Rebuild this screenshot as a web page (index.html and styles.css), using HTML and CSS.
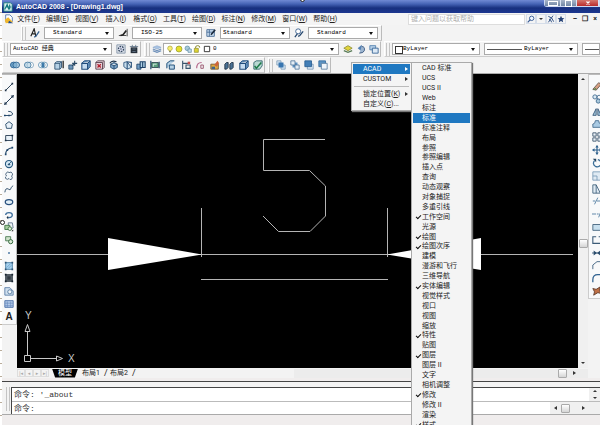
FILE: index.html
```html
<!DOCTYPE html>
<html lang="zh-CN">
<head>
    <meta charset="UTF-8">
    <meta name="viewport" content="width=device-width, initial-scale=1.0">
    <title>AutoCAD 2008 - [Drawing1.dwg]</title>
    <link rel="stylesheet" href="styles.css">
</head>
<body>
    <!-- Icon set -->
    <svg class="sprite" aria-hidden="true">
        <symbol id="i-app" viewBox="0 0 12 12"><path d="M1 1h8l2 2v8H1z" fill="#dff3f1" stroke="#177"/><path d="M2 9l3-6 2 6M3 6h7M8 3v6" fill="none" stroke="#157a80" stroke-width="1.4"/></symbol>
        <symbol id="i-close" viewBox="0 0 12 12"><path d="M3 3l6 6M9 3l-6 6" stroke="#fff" stroke-width="2.4"/></symbol>
        <symbol id="i-doc" viewBox="0 0 12 12"><path d="M2 1h5l3 3v5H2z" fill="#fff" stroke="#4b6fa8"/><path d="M1 7l4-3 6 6-9 1z" fill="#f0b72c"/><path d="M6 8l5 3H5z" fill="#234b91"/></symbol>
        <symbol id="i-textstyle" viewBox="0 0 12 12"><path d="M1 10L5 1l2 9M3 7h4" fill="none" stroke="#222" stroke-width="1.4"/><path d="M11 4L7 10l-2 1" fill="none" stroke="#35608f" stroke-width="1.6"/></symbol>
        <symbol id="i-dimstyle" viewBox="0 0 12 12"><path d="M11 1v9M1 9h9" stroke="#333" fill="none"/><path d="M10 3L6 8 3 9" fill="none" stroke="#222" stroke-width="2"/></symbol>
        <symbol id="i-tablestyle" viewBox="0 0 12 12"><path d="M1 2h9v8H1zM1 5h9M4 2v8" fill="#cfe0f2" stroke="#3f6590"/><path d="M11 2L6 8" stroke="#1b2a3c" stroke-width="2"/></symbol>
        <symbol id="i-leader" viewBox="0 0 12 12"><circle cx="5" cy="4" r="3" fill="#fff" stroke="#2d5687"/><path d="M4 7L1 11M11 4L7 9l-2 1" fill="none" stroke="#23456d" stroke-width="1.5"/></symbol>
        <symbol id="i-gear" viewBox="0 0 12 12"><path d="M1 1h10v10H1z" fill="#d6dde5" stroke="#8796a8"/><circle cx="6" cy="6" r="3" fill="#eef" stroke="#33475f" stroke-width="1.6" stroke-dasharray="2 1"/><circle cx="6" cy="6" r="1" fill="#33475f"/></symbol>
        <symbol id="i-work" viewBox="0 0 12 12"><path d="M2 4h8v7H2z" fill="#27313c"/><path d="M1 3h10M4 1v3M8 1v3M4 6h4M4 9h4" stroke="#65788c"/></symbol>
        <symbol id="i-layers" viewBox="0 0 12 12"><path d="M1 4l5-2 5 2-5 2z" fill="#a9c4e4" stroke="#7c9cc2" stroke-width=".6"/><path d="M1 6l5 2 5-2M1 8l5 2 5-2" fill="none" stroke="#6d8fb9" stroke-width="1.4"/></symbol>
        <symbol id="i-bulb" viewBox="0 0 12 12"><circle cx="6" cy="5" r="3.5" fill="#f7ee74" stroke="#a9a238"/><path d="M4.500 9h3v2h-3z" fill="#8c8c70"/></symbol>
        <symbol id="i-sun" viewBox="0 0 12 12"><circle cx="6" cy="6" r="4.500" fill="#e6df2d" stroke="#8d932a"/></symbol>
        <symbol id="i-freeze" viewBox="0 0 12 12"><circle cx="5" cy="5" r="3.500" fill="#a8c9d8" stroke="#5889a3"/><path d="M6 6h5v5H6z" fill="#c7dcea" stroke="#5889a3"/></symbol>
        <symbol id="i-lock" viewBox="0 0 12 12"><path d="M4 5V3q0-2 3-2t3 2v1" fill="none" stroke="#87872a" stroke-width="1.400"/><path d="M2 5h6v6H2z" fill="#ded434" stroke="#87872a"/></symbol>
        <symbol id="i-swatch" viewBox="0 0 12 12"><path d="M2 2h8v8H2z" fill="#fff" stroke="#222" stroke-width="1.300"/></symbol>
        <symbol id="i-laymake" viewBox="0 0 12 12"><path d="M1 5l5-3 5 3-5 3z" fill="#e2d53c" stroke="#8d8c35"/><path d="M1 8l5 2 5-2" fill="none" stroke="#587b55" stroke-width="1.500"/></symbol>
        <symbol id="i-layprev" viewBox="0 0 12 12"><path d="M7 1L2 5l5 4z" fill="#5481b4"/><path d="M7 3q4 0 3 5-1 3-6 3" fill="#9db5cf" stroke="#314f78"/></symbol>
        <symbol id="i-laystate" viewBox="0 0 12 12"><path d="M1 2h7v5H1z" fill="#b7d0e8" stroke="#4b7bab"/><path d="M4 5h7v6H4z" fill="#dce9f5" stroke="#2d5d90"/></symbol>
        <symbol id="i-union" viewBox="0 0 12 12"><ellipse cx="4.500" cy="6" rx="4" ry="3.500" fill="#6fa3c9" stroke="#2c6290"/><ellipse cx="7.500" cy="6" rx="4" ry="3.500" fill="#8cb8d6" fill-opacity=".7" stroke="#2c6290"/></symbol>
        <symbol id="i-subtract" viewBox="0 0 12 12"><ellipse cx="7.500" cy="6" rx="4" ry="3.500" fill="#fff" stroke="#7ea2bd"/><ellipse cx="4.500" cy="6" rx="4" ry="3.500" fill="#a8cbe0" fill-opacity=".6" stroke="#44789f"/></symbol>
        <symbol id="i-intersect" viewBox="0 0 12 12"><ellipse cx="4.500" cy="6" rx="4" ry="3.500" fill="#f5faff" stroke="#6796b6"/><ellipse cx="7.500" cy="6" rx="4" ry="3.500" fill="none" stroke="#6796b6"/><ellipse cx="6" cy="6" rx="1.500" ry="3" fill="#3b79a9"/></symbol>
        <symbol id="i-extrude" viewBox="0 0 12 12"><path d="M1 4h6v7H1zM1 4l2-2h6v7l-2 2M7 4l2-2" fill="#b7d2e6" stroke="#254a6c"/><path d="M11 1v9" stroke="#222" stroke-width="1.500"/></symbol>
        <symbol id="i-moveface" viewBox="0 0 12 12"><path d="M1 6h5v5H1z" fill="#6f97ba" stroke="#254a6c"/><path d="M5 7l3-3M8 1v6M5 4h6" stroke="#2b4a66" stroke-width="1.300"/></symbol>
        <symbol id="i-cube" viewBox="0 0 12 12"><path d="M1 4h7v7H1z" fill="#c6dcf0" stroke="#204c7c" stroke-width="1.300"/><path d="M1 4l3-3h7v7l-3 3V4l3-3" fill="#6b98c4" stroke="#204c7c" stroke-width="1.200"/></symbol>
        <symbol id="i-delface" viewBox="0 0 12 12"><path d="M1 3h8v8H1zM1 3l2-2h8v8l-2 2" fill="#ead7dd" stroke="#4e3442"/><path d="M3 5l4 4M7 5L3 9" stroke="#b2202f" stroke-width="1.600"/></symbol>
        <symbol id="i-rotface" viewBox="0 0 12 12"><path d="M2 5l4-2 4 2v4l-4 2-4-2zM2 5l4 2 4-2M6 7v4" fill="#7ba5ca" stroke="#1e4368"/><path d="M1 4q2-4 8-2" fill="none" stroke="#20364e" stroke-width="1.300"/></symbol>
        <symbol id="i-taper" viewBox="0 0 12 12"><path d="M1 3l4-1 5 7-5 2-4-3z" fill="#c7ddec" stroke="#254e78"/><path d="M5 2l5 1v6M5 2v9" fill="none" stroke="#254e78" stroke-width="1.300"/></symbol>
        <symbol id="i-copyface" viewBox="0 0 12 12"><path d="M1 5h5v6H1z" fill="#75a0c6" stroke="#1d4167"/><path d="M5 2h6v7H5zM8 2v7" fill="#afd0e5" stroke="#1d4167" stroke-width="1.300"/></symbol>
        <symbol id="i-colorface" viewBox="0 0 12 12"><path d="M1 1v10M11 2v8" stroke="#275070" stroke-width="1.500"/><path d="M2 3h8v6H2z" fill="#589f7c" stroke="#29424e"/><path d="M4 8V5h4" fill="none" stroke="#e7f1ee"/></symbol>
        <symbol id="i-copyedge" viewBox="0 0 12 12"><path d="M1 10V4l4-3h5M4 11V6h6v5z" fill="#b7d2e6" stroke="#26547d" stroke-width="1.200"/></symbol>
        <symbol id="i-coloredge" viewBox="0 0 12 12"><path d="M2 1v10M2 4h7M6 6h5v4H6z" fill="#eee" stroke="#38546b" stroke-width="1.300"/><path d="M8 2h3v3H8z" fill="#c8504f"/></symbol>
        <symbol id="i-imprint" viewBox="0 0 12 12"><path d="M2 10q0-7 6-7" fill="none" stroke="#b66b8d" stroke-width="1.400"/><path d="M7 6h3v4H7z" fill="none" stroke="#914963"/></symbol>
        <symbol id="i-clean" viewBox="0 0 12 12"><path d="M1 5h9v6H1z" fill="#dfab40" stroke="#73532a"/><path d="M5 6l4-5 2 3-3 4z" fill="#ce643b"/><path d="M2 8h4v3H2z" fill="#41648c"/></symbol>
        <symbol id="i-separate" viewBox="0 0 12 12"><path d="M1 5l2-2h2v6l-2 2H1zM7 5l2-2h2v6l-2 2H7z" fill="#4a7194" stroke="#1c2c3f"/></symbol>
        <symbol id="i-check" viewBox="0 0 12 12"><path d="M1 3l3-2h7v6l-3 4H1z" fill="#b9d8d2" stroke="#2c6066"/><path d="M2 7l2 3 6-7" fill="none" stroke="#1c7a48" stroke-width="1.800"/></symbol>
        <symbol id="i-front" viewBox="0 0 12 12"><path d="M1 1h5v5H1zM6 6h5v5H6z" fill="#d7e5f2" stroke="#7f9db8"/><path d="M3 3h6v6H3z" fill="#3976b0"/></symbol>
        <symbol id="i-back" viewBox="0 0 12 12"><path d="M3 3h6v6H3z" fill="#5a91c3"/><path d="M1 1h5v5H1zM6 6h5v5H6z" fill="#e4edf5" stroke="#56799b"/></symbol>
        <symbol id="i-above" viewBox="0 0 12 12"><path d="M4 5h7v6H4z" fill="#dce8f3" stroke="#7695b3"/><path d="M1 1h8v7H1z" fill="#427eb6" stroke="#285e91"/></symbol>
        <symbol id="i-under" viewBox="0 0 12 12"><path d="M1 1h8v7H1z" fill="#5d94c4" stroke="#336b9d"/><path d="M4 4h7v7H4z" fill="#f0f5fa" stroke="#56799b"/></symbol>
        <symbol id="i-line" viewBox="0 0 12 12"><path d="M2 10l8-8" stroke="#31475e" stroke-width="1.200"/><path d="M1 9h2v2H1zM9 1h2v2H9z" fill="#1f3347"/></symbol>
        <symbol id="i-xline" viewBox="0 0 12 12"><path d="M1 11L11 1" stroke="#263c54" stroke-width="1.200"/><path d="M0 12l1-4 3 3zM12 0L8 1l3 3z" fill="#263c54"/></symbol>
        <symbol id="i-pline" viewBox="0 0 12 12"><path d="M1 9h6q4 0 3-3-1-2-5-2" fill="none" stroke="#35536f" stroke-width="1.200"/><path d="M0 8h2v2H0zM5 8h2v2H5z" fill="#1f466c"/></symbol>
        <symbol id="i-polygon" viewBox="0 0 12 12"><path d="M6 2l4 3-1 5H3L2 5z" fill="#e8f1f8" stroke="#3b5b77" stroke-width="1.200"/></symbol>
        <symbol id="i-rect" viewBox="0 0 12 12"><path d="M2 3h8v6H2z" fill="#e8f1f8" stroke="#3b4f63" stroke-width="1.200"/><path d="M1 8h2v2H1zM9 2h2v2H9z" fill="#1f3347"/></symbol>
        <symbol id="i-arc" viewBox="0 0 12 12"><path d="M2 10q0-7 8-8" fill="none" stroke="#2f506f" stroke-width="1.300"/><path d="M1 9h2v2H1zM9 1h2v2H9zM3 4h2v2H3z" fill="#1f466c"/></symbol>
        <symbol id="i-circle" viewBox="0 0 12 12"><circle cx="6" cy="6" r="4.300" fill="#d6e9f5" stroke="#28597f" stroke-width="1.300"/><path d="M6 6l3-3M5 6h2v1H5z" stroke="#28597f"/></symbol>
        <symbol id="i-cloud" viewBox="0 0 12 12"><path d="M3 2q2-2 3 0 3-2 4 1 1 2-1 3 2 2 0 4-2 1-3-1-2 2-4 0-1-2 1-3-2-2 0-4z" fill="#f3f8fb" stroke="#4a647d" stroke-width="1.100"/></symbol>
        <symbol id="i-spline" viewBox="0 0 12 12"><path d="M1 10q1-6 4-4t3 0 3-4" fill="none" stroke="#3d5a75" stroke-width="1.200"/></symbol>
        <symbol id="i-ellipse" viewBox="0 0 12 12"><ellipse cx="6" cy="6" rx="4.500" ry="3" fill="#e3f0f8" stroke="#274f7d" stroke-width="1.500"/></symbol>
        <symbol id="i-ellarc" viewBox="0 0 12 12"><path d="M2 6q0-3 4-3t4 3-4 3H4" fill="none" stroke="#3c6d9b" stroke-width="1.500"/><path d="M5 7v4L3 9z" fill="#1f3347"/></symbol>
        <symbol id="i-insert" viewBox="0 0 12 12"><path d="M5 1h5l1 6-5 2z" fill="#eef3f6" stroke="#597087"/><path d="M1 4h6v5H1z" fill="#a6cfa0" stroke="#366c3c"/><circle cx="7" cy="8" r="2.200" fill="#e0edda" stroke="#366c3c"/><path d="M9 11h2V9z" fill="#111"/></symbol>
        <symbol id="i-block" viewBox="0 0 12 12"><path d="M2 2h6v5H2z" fill="#cfe2cb" stroke="#3f7147"/><circle cx="8" cy="8" r="2.500" fill="#dcebd7" stroke="#356b3f" stroke-width="1.200"/></symbol>
        <symbol id="i-point" viewBox="0 0 12 12"><path d="M5 5h2v2H5z" fill="#2f6296"/></symbol>
        <symbol id="i-hatch" viewBox="0 0 12 12"><path d="M2 2h8v8H2z" fill="#a9d2ee" stroke="#3b759c"/><path d="M1 1h2v2H1zM9 1h2v2H9zM1 9h2v2H1zM9 9h2v2H9z" fill="#305675"/><path d="M3 8l5-5M5 9l4-4" stroke="#6ba4cb"/></symbol>
        <symbol id="i-gradient" viewBox="0 0 12 12"><path d="M2 2h8v8H2z" fill="#59626b" stroke="#222c35"/><path d="M1 1h2v2H1zM9 1h2v2H9zM1 9h2v2H1zM9 9h2v2H9z" fill="#14212d"/><path d="M4 4h4v4H4z" fill="#303941"/></symbol>
        <symbol id="i-region" viewBox="0 0 12 12"><path d="M1 2h6l4 4v5H1z" fill="#d0e0ef" stroke="#5377a1"/><circle cx="7" cy="7" r="2.500" fill="#f2f7fb" stroke="#4d7299"/></symbol>
        <symbol id="i-table" viewBox="0 0 12 12"><path d="M1 2h10v8H1z" fill="#b5cbea" stroke="#4168a2"/><path d="M1 5h10M1 8h10M4 3v7M8 3v7" stroke="#6689bd" stroke-width=".8"/></symbol>
        <symbol id="i-erase" viewBox="0 0 12 12"><path d="M1 10l7-8 3 2-6 7z" fill="#d79f83" stroke="#60534b"/><path d="M1 11l3-3 2 2z" fill="#5b8752"/></symbol>
        <symbol id="i-copy" viewBox="0 0 12 12"><circle cx="3.500" cy="3.500" r="2.500" fill="#dbeaf4" stroke="#38648a"/><circle cx="8.500" cy="4" r="2.500" fill="none" stroke="#38648a"/><circle cx="7.500" cy="8.500" r="2.500" fill="#a9c8dc" stroke="#38648a"/></symbol>
        <symbol id="i-mirror" viewBox="0 0 12 12"><path d="M5 2v8H1zM7 2v8h4z" fill="#a6c7dd" stroke="#2b4e70"/></symbol>
        <symbol id="i-offset" viewBox="0 0 12 12"><path d="M1 9V6q3 0 3-4h4q0 4 3 4v4H1z" fill="#a9cae3" stroke="#3b6488"/></symbol>
        <symbol id="i-array" viewBox="0 0 12 12"><path d="M1 1h4v4H1zM7 1h4v4H7zM1 7h4v4H1zM7 7h4v4H7z" fill="#eaf1f7" stroke="#344d66"/></symbol>
        <symbol id="i-move" viewBox="0 0 12 12"><path d="M6 1v10M1 6h10" stroke="#2e618e" stroke-width="1.400"/><path d="M4 3l2-3 2 3zM4 9l2 3 2-3zM3 4L0 6l3 2zM9 4l3 2-3 2z" fill="#2e618e"/></symbol>
        <symbol id="i-rotate" viewBox="0 0 12 12"><path d="M3 3q-3 4 1 7 5 2 7-3 0-4-4-5" fill="none" stroke="#3b6f98" stroke-width="1.500"/><path d="M1 1h4v4z" fill="#234460"/></symbol>
        <symbol id="i-scale" viewBox="0 0 12 12"><path d="M1 1h10v10H1zM1 6h5v5" fill="#dfeaf3" stroke="#7799b6"/></symbol>
        <symbol id="i-stretch" viewBox="0 0 12 12"><path d="M1 1h4l5 10H1zM5 1v10" fill="#dfeaf3" stroke="#3b5b77"/></symbol>
        <symbol id="i-trim" viewBox="0 0 12 12"><path d="M1 6h3M6 6h5M3 10l4-8" stroke="#44759b"/></symbol>
        <symbol id="i-extend" viewBox="0 0 12 12"><path d="M0 6h5M6 6h2M8 10l3-8" stroke="#44759b"/></symbol>
        <symbol id="i-break" viewBox="0 0 12 12"><path d="M1 3h10v7H1z" fill="#c8e0ef" stroke="#3b5b77"/></symbol>
        <symbol id="i-breakpt" viewBox="0 0 12 12"><path d="M5 2H1v8h10V6M8 2h3" fill="none" stroke="#3b5b77" stroke-width="1.300"/></symbol>
        <symbol id="i-join" viewBox="0 0 12 12"><path d="M0 6h12" stroke="#2a4d6d"/><path d="M2 3l4 3-4 3zM10 3L6 6l4 3z" fill="#2a4d6d"/></symbol>
        <symbol id="i-chamfer" viewBox="0 0 12 12"><path d="M1 11V6l5-4h5" fill="none" stroke="#52718d" stroke-width="1.200"/></symbol>
        <symbol id="i-fillet" viewBox="0 0 12 12"><path d="M1 11V8q0-6 6-6h4" fill="none" stroke="#2f6190" stroke-width="1.500"/></symbol>
        <symbol id="i-explode" viewBox="0 0 12 12"><path d="M1 3l4 1 5-3-1 4 2 4-4-1-5 3 1-4z" fill="#bf7046" stroke="#5b3b2c"/></symbol>
        <symbol id="i-search" viewBox="0 0 12 12"><circle cx="7" cy="5" r="3.300" fill="#eef5ff" stroke="#385b95" stroke-width="1.400"/><path d="M5 7l-4 4" stroke="#385b95" stroke-width="1.800"/></symbol>
        <symbol id="i-comm" viewBox="0 0 12 12"><path d="M2 2q6 1 8 8M3 6q3 1 4 5M9 1L2 11" fill="none" stroke="#345589" stroke-width="1.500"/></symbol>
        <symbol id="i-star" viewBox="0 0 12 12"><path d="M6 1l1.500 3.500 3.500.4-2.600 2.400.8 3.700L6 9l-3.200 2 .8-3.700L1 4.900l3.500-.4z" fill="#254276"/></symbol>
    </svg>

    <header class="titlebar">
        <svg class="icon"><use href="#i-app"/></svg>
        <h1>AutoCAD 2008 - [Drawing1.dwg]</h1>
        <div class="window-buttons">
            <button class="win-min" aria-label="最小化"></button>
            <button class="win-max" aria-label="还原"></button>
            <button class="win-close" aria-label="关闭"><svg class="icon"><use href="#i-close"/></svg></button>
        </div>
    </header>

    <nav class="menubar">
        <svg class="icon"><use href="#i-doc"/></svg>
        <div class="menus">
            <button>文件(<u>F</u>)</button>
            <button>编辑(<u>E</u>)</button>
            <button>视图(<u>V</u>)</button>
            <button>插入(<u>I</u>)</button>
            <button>格式(<u>O</u>)</button>
            <button>工具(<u>T</u>)</button>
            <button>绘图(<u>D</u>)</button>
            <button>标注(<u>N</u>)</button>
            <button>修改(<u>M</u>)</button>
            <button>窗口(<u>W</u>)</button>
            <button>帮助(<u>H</u>)</button>
        </div>
        <input class="help-search" type="text" placeholder="键入问题以获取帮助" aria-label="帮助搜索">
        <div class="help-tools">
            <button aria-label="搜索"><svg class="icon"><use href="#i-search"/></svg></button>
            <button aria-label="搜索选项"><i class="arrow-down"></i></button>
            <button aria-label="通讯中心"><svg class="icon"><use href="#i-comm"/></svg></button>
            <button aria-label="收藏夹"><svg class="icon"><use href="#i-star"/></svg></button>
        </div>
        <div class="doc-buttons">
            <button aria-label="最小化文档">–</button>
            <button aria-label="还原文档">❐</button>
            <button aria-label="关闭文档">×</button>
        </div>
    </nav>

    <!-- Styles toolbar -->
    <div class="toolbar toolbar-styles">
        <div class="bar">
            <i class="grip"></i>
            <svg class="icon"><use href="#i-textstyle"/></svg>
            <span class="combo"><select aria-label="文字样式"><option>Standard</option></select></span>
            <svg class="icon"><use href="#i-dimstyle"/></svg>
            <span class="combo"><select aria-label="标注样式"><option>ISO-25</option></select></span>
            <svg class="icon"><use href="#i-tablestyle"/></svg>
            <span class="combo tight"><select aria-label="表格样式"><option>Standard</option></select></span>
            <svg class="icon"><use href="#i-leader"/></svg>
            <span class="combo"><select aria-label="多重引线样式"><option>Standard</option></select></span>
        </div>
    </div>

    <!-- Workspace, layers and properties -->
    <div class="toolbar toolbar-layers">
        <div class="bar">
            <i class="grip"></i>
            <span class="combo tight workspace-select"><select aria-label="工作空间"><option>AutoCAD 经典</option></select></span>
            <button aria-label="工作空间设置"><svg class="icon"><use href="#i-gear"/></svg></button>
            <button aria-label="我的工作空间"><svg class="icon"><use href="#i-work"/></svg></button>
        </div>
        <div class="bar">
            <i class="grip"></i>
            <button aria-label="图层特性管理器"><svg class="icon"><use href="#i-layers"/></svg></button>
            <span class="combo layer-select">
                <select aria-label="图层"><option>0</option></select>
                <span class="layer-flags">
                    <svg class="icon"><use href="#i-bulb"/></svg>
                    <svg class="icon"><use href="#i-sun"/></svg>
                    <svg class="icon"><use href="#i-freeze"/></svg>
                    <svg class="icon"><use href="#i-lock"/></svg>
                    <svg class="icon"><use href="#i-swatch"/></svg>
                </span>
            </span>
            <button aria-label="置为当前图层"><svg class="icon"><use href="#i-laymake"/></svg></button>
            <button aria-label="上一个图层"><svg class="icon"><use href="#i-layprev"/></svg></button>
            <button aria-label="图层状态"><svg class="icon"><use href="#i-laystate"/></svg></button>
        </div>
        <div class="bar bar-props">
            <i class="grip"></i>
            <span class="combo color-select"><select aria-label="颜色"><option>ByLayer</option></select></span>
            <span class="combo line-select"><select aria-label="线型"><option>ByLayer</option></select></span>
            <span class="combo weight-select"><select aria-label="线宽"><option></option></select></span>
        </div>
    </div>

    <!-- Solid editing and draw order -->
    <div class="toolbar toolbar-solids">
        <div class="bar">
            <div class="group group-bool">
                <svg class="icon"><use href="#i-union"/></svg>
                <svg class="icon"><use href="#i-subtract"/></svg>
                <svg class="icon"><use href="#i-intersect"/></svg>
            </div>
            <div class="group group-face">
                <svg class="icon"><use href="#i-extrude"/></svg>
                <svg class="icon"><use href="#i-moveface"/></svg>
                <svg class="icon"><use href="#i-cube"/></svg>
                <svg class="icon"><use href="#i-delface"/></svg>
                <svg class="icon"><use href="#i-rotface"/></svg>
                <svg class="icon"><use href="#i-taper"/></svg>
                <svg class="icon"><use href="#i-copyface"/></svg>
                <svg class="icon"><use href="#i-colorface"/></svg>
            </div>
            <div class="group group-body">
                <svg class="icon"><use href="#i-copyedge"/></svg>
                <svg class="icon"><use href="#i-coloredge"/></svg>
                <svg class="icon"><use href="#i-imprint"/></svg>
                <svg class="icon"><use href="#i-clean"/></svg>
                <svg class="icon"><use href="#i-separate"/></svg>
                <svg class="icon"><use href="#i-cube"/></svg>
                <svg class="icon"><use href="#i-check"/></svg>
            </div>
        </div>
        <div class="bar">
            <i class="grip"></i>
            <div class="group group-order">
                <svg class="icon"><use href="#i-front"/></svg>
                <svg class="icon"><use href="#i-back"/></svg>
                <svg class="icon"><use href="#i-above"/></svg>
                <svg class="icon"><use href="#i-under"/></svg>
            </div>
        </div>
    </div>

    <main class="workspace">
        <aside class="tools tools-draw">
            <svg class="icon"><use href="#i-line"/></svg>
            <svg class="icon"><use href="#i-xline"/></svg>
            <svg class="icon"><use href="#i-pline"/></svg>
            <svg class="icon"><use href="#i-polygon"/></svg>
            <svg class="icon"><use href="#i-rect"/></svg>
            <svg class="icon"><use href="#i-arc"/></svg>
            <svg class="icon"><use href="#i-circle"/></svg>
            <svg class="icon"><use href="#i-cloud"/></svg>
            <svg class="icon"><use href="#i-spline"/></svg>
            <svg class="icon"><use href="#i-ellipse"/></svg>
            <svg class="icon"><use href="#i-ellarc"/></svg>
            <svg class="icon"><use href="#i-insert"/></svg>
            <svg class="icon"><use href="#i-block"/></svg>
            <svg class="icon"><use href="#i-point"/></svg>
            <svg class="icon"><use href="#i-hatch"/></svg>
            <svg class="icon"><use href="#i-gradient"/></svg>
            <svg class="icon"><use href="#i-region"/></svg>
            <svg class="icon"><use href="#i-table"/></svg>
            <button class="mtext" aria-label="多行文字">A</button>
        </aside>

        <section class="viewer">
            <div class="canvas">
                <svg class="drawing" width="561" height="294" viewBox="17 74 561 294">
                    <g fill="none" stroke="#b4b4b4">
                        <path d="M17 254.500H573"/>
                        <path d="M201.500 208V257M387.500 208V257M201 279.500H388"/>
                        <path d="M325 139.500H263.500V170.500H309.500L325.500 186V216L310 231.500H278.500L263 216"/>
                    </g>
                    <path d="M108 238L202 254.500 108 270zM481 238L387 254.500 481 270z" fill="#fff"/>
                    <g fill="none" stroke="#c8c8c8">
                        <path d="M24.500 355.500h6v6h-6zM27.500 355V332M31 358.500H56"/>
                        <path d="M25 331.500l2.500-7 2.500 7zM56.500 356l6 2.500-6 2.500z"/>
                    </g>
                    <text class="axis" x="25" y="319">Y</text>
                    <text class="axis" x="68" y="362">X</text>
                </svg>
                <div class="vscroll">
                    <button aria-label="向上滚动"><i class="arrow-up"></i></button>
                    <span class="thumb"></span>
                    <button aria-label="向下滚动"><i class="arrow-down"></i></button>
                </div>
            </div>
            <div class="tabs">
                <div class="tab-nav">
                    <button aria-label="第一个">|◂</button>
                    <button aria-label="上一个">◂</button>
                    <button aria-label="下一个">▸</button>
                    <button aria-label="最后一个">▸|</button>
                </div>
                <button class="tab active">模型</button>
                <button class="tab">布局1</button>
                <span class="slash">/</span>
                <button class="tab">布局2</button>
                <span class="slash">/</span>
                <div class="hscroll">
                    <span class="thumb"></span>
                    <button aria-label="向右滚动"><i class="arrow-right"></i></button>
                </div>
            </div>
        </section>

        <aside class="tools tools-modify">
            <svg class="icon"><use href="#i-erase"/></svg>
            <svg class="icon"><use href="#i-copy"/></svg>
            <svg class="icon"><use href="#i-mirror"/></svg>
            <svg class="icon"><use href="#i-offset"/></svg>
            <svg class="icon"><use href="#i-array"/></svg>
            <svg class="icon"><use href="#i-move"/></svg>
            <svg class="icon"><use href="#i-rotate"/></svg>
            <svg class="icon"><use href="#i-scale"/></svg>
            <svg class="icon"><use href="#i-stretch"/></svg>
            <svg class="icon"><use href="#i-trim"/></svg>
            <svg class="icon"><use href="#i-extend"/></svg>
            <svg class="icon"><use href="#i-break"/></svg>
            <svg class="icon"><use href="#i-breakpt"/></svg>
            <svg class="icon"><use href="#i-join"/></svg>
            <svg class="icon"><use href="#i-chamfer"/></svg>
            <svg class="icon"><use href="#i-fillet"/></svg>
            <svg class="icon"><use href="#i-explode"/></svg>
        </aside>
    </main>

    <section class="command">
        <i class="grip"></i>
        <div class="command-box">
            <div class="command-row">
                <p>命令: '_about</p>
                <div class="history-scroll">
                    <button aria-label="向上"><i class="arrow-up"></i></button>
                    <button aria-label="向下"><i class="arrow-down"></i></button>
                </div>
            </div>
            <div class="command-row">
                <label for="cmd">命令:</label>
                <input id="cmd" type="text">
                <div class="line-scroll">
                    <button aria-label="向左"><i class="arrow-left"></i></button>
                    <span class="thumb"></span>
                    <button aria-label="向右"><i class="arrow-right"></i></button>
                </div>
            </div>
        </div>
    </section>

    <!-- Toolbar context menu -->
    <ul class="menu context">
        <li class="selected">ACAD<i class="arrow-right"></i></li>
        <li>CUSTOM<i class="arrow-right"></i></li>
        <li class="divider"></li>
        <li>锁定位置(<u>K</u>)<i class="arrow-right"></i></li>
        <li>自定义(<u>C</u>)...</li>
    </ul>

    <ul class="menu submenu">
        <li>CAD 标准</li>
        <li>UCS</li>
        <li>UCS II</li>
        <li>Web</li>
        <li>标注</li>
        <li class="selected">标准</li>
        <li>标准注释</li>
        <li>布局</li>
        <li>参照</li>
        <li>参照编辑</li>
        <li>插入点</li>
        <li>查询</li>
        <li>动态观察</li>
        <li>对象捕捉</li>
        <li>多重引线</li>
        <li class="checked">工作空间</li>
        <li>光源</li>
        <li class="checked">绘图</li>
        <li class="checked">绘图次序</li>
        <li>建模</li>
        <li>漫游和飞行</li>
        <li>三维导航</li>
        <li class="checked">实体编辑</li>
        <li>视觉样式</li>
        <li>视口</li>
        <li>视图</li>
        <li>缩放</li>
        <li class="checked">特性</li>
        <li>贴图</li>
        <li class="checked">图层</li>
        <li>图层 II</li>
        <li>文字</li>
        <li>相机调整</li>
        <li class="checked">修改</li>
        <li>修改 II</li>
        <li>渲染</li>
        <li class="checked">样式</li>
    </ul>

    <i class="handle handle-top"></i>
    <i class="handle handle-left"></i>
</body>
</html>
```
FILE: styles.css
```css
* {
    box-sizing: border-box;
}

body {
    position: relative;
    display: flex;
    flex-direction: column;
    min-height: 100vh;
    margin: 0;
    padding-left: 2px;
    overflow: hidden;
    background: #f0eded;
    color: #222;
    font-family: Roboto, "Noto Sans CJK SC", sans-serif;
    font-size: 7px;
    line-height: 9px;
}

/* ruler ticks down the left edge */
body::before {
    content: "";
    position: absolute;
    top: 0;
    bottom: 0;
    left: 0;
    width: 2px;
    background: repeating-linear-gradient(#fff 0 12px, #b9ac9a 12px 13px);
}

button,
input,
select {
    margin: 0;
    padding: 0;
    border: none;
    border-radius: 0;
    background: none;
    color: inherit;
    font: inherit;
    outline: none;
}

button {
    display: flex;
    align-items: center;
    justify-content: center;
    flex: none;
}

.sprite {
    position: absolute;
    width: 0;
    height: 0;
}

.icon {
    display: block;
    flex: none;
    width: 10px;
    height: 10px;
}

/* small arrows */
.arrow-up,
.arrow-down,
.arrow-left,
.arrow-right {
    flex: none;
    border: 2px solid transparent;
}

.arrow-up {
    border-top: none;
    border-bottom-color: #333;
}

.arrow-down {
    border-bottom: none;
    border-top-color: #333;
}

.arrow-left {
    border-left: none;
    border-right: 3px solid #333;
}

.arrow-right {
    border-right: none;
    border-left: 3px solid #333;
}

/* title bar */
.titlebar {
    display: flex;
    align-items: center;
    height: 13px;
    padding-left: 1px;
    background: linear-gradient(#7089d4, #4563b5 4px, #17307f 8px, #1d3790);
    color: #fff;
}

.titlebar h1 {
    flex: 1;
    margin: 0 0 0 3px;
    font-family: "Liberation Sans", sans-serif;
    font-size: 7px;
    font-weight: bold;
}

.window-buttons {
    display: flex;
    align-self: flex-start;
    height: 7px;
    border: 1px solid #cdd8f3;
    border-top: none;
    border-radius: 0 0 0 3px;
}

.window-buttons button {
    width: 16px;
    background: linear-gradient(#a9b6ca, #7187a5);
    border-right: 1px solid #dbe4f5;
}

.window-buttons .win-min::before,
.window-buttons .win-max::before {
    content: "";
    width: 8px;
    height: 3px;
    border: 1px solid #fff;
}

.window-buttons .win-max::before {
    width: 5px;
    height: 5px;
}

.window-buttons .win-close {
    width: 22px;
    background: linear-gradient(#d5776d, #b92c2c);
}

.win-close .icon {
    width: 6px;
    height: 6px;
}

/* menu bar */
.menubar {
    display: flex;
    align-items: center;
    height: 12px;
    padding-left: 2px;
    background: #f4f4f4;
}

.menus {
    display: flex;
    flex: 1;
    gap: 6px;
    margin-left: 3px;
}

.menus button {
    min-width: 23px;
    white-space: nowrap;
}

.help-search {
    width: 117px;
    height: 11px;
    padding: 0 2px;
    border: 1px solid #ddd;
    background: #fff;
}

.help-search::placeholder {
    color: #b0b0b0;
    opacity: 1;
}

.help-tools {
    display: flex;
    align-items: center;
    margin: 0 4px 0 1px;
}

.help-tools button {
    width: 10px;
    height: 10px;
    border: 1px solid #d5dde9;
}

.help-tools .icon {
    width: 8px;
    height: 8px;
}

.doc-buttons {
    display: flex;
}

.doc-buttons button {
    width: 10px;
    height: 10px;
    font-weight: bold;
}

/* toolbars */
.toolbar {
    display: flex;
    height: 16px;
    background: #f3f3f3;
}

.bar {
    display: flex;
    align-items: center;
    flex: none;
    border: 1px solid #fff;
    border-right-color: #bbb;
    border-bottom-color: #ccc;
}

.grip {
    flex: none;
    width: 4px;
    height: 13px;
    border: 1px solid #c4c4c4;
    border-top: none;
    border-bottom: none;
}

.combo {
    position: relative;
    flex: none;
    width: 70px;
    height: 12px;
    border: 1px solid #aaa;
    background: #fff;
}

.combo::after {
    content: "";
    position: absolute;
    top: 4px;
    right: 4px;
    border: 2px solid transparent;
    border-bottom: none;
    border-top: 3px solid #111;
    pointer-events: none;
}

.combo select {
    display: block;
    width: 100%;
    height: 10px;
    padding-left: 8px;
    appearance: none;
    color: #000;
    font-family: "Liberation Mono", "Noto Sans CJK SC", monospace;
    font-size: 6px;
    line-height: 10px;
}

.combo.tight select {
    padding-left: 2px;
}

.toolbar-styles {
    padding-left: 19px;
}

.toolbar-styles .bar {
    padding-right: 3px;
}

.toolbar-styles .icon {
    margin: 0 4px;
}

.toolbar-layers .bar {
    padding-left: 1px;
}

.toolbar-layers button {
    width: 13px;
}

.toolbar-layers .combo {
    margin: 0 2px;
}

.toolbar-layers .workspace-select {
    width: 102px;
}

.toolbar-layers .bar + .bar {
    margin-left: 3px;
}

.layer-select {
    width: 176px;
}

.toolbar-layers .layer-select {
    width: 176px;
    margin-left: 0;
}

.layer-select select {
    padding-left: 49px;
}

.layer-flags {
    position: absolute;
    top: 1px;
    left: 2px;
    display: flex;
    gap: 1px;
    pointer-events: none;
}

.layer-flags .icon {
    width: 8px;
    height: 8px;
}

.layer-flags .icon:last-child {
    margin-left: 1px;
}

.toolbar-layers .bar-props {
    flex: 1;
    min-width: 0;
    border-right: none;
}

.toolbar-layers .color-select {
    width: 88px;
}

.color-select::before {
    content: "";
    position: absolute;
    top: 2px;
    left: 2px;
    width: 6px;
    height: 6px;
    border: 1px solid #333;
    pointer-events: none;
}

.combo.color-select select {
    padding-left: 10px;
}

.toolbar-layers .line-select {
    width: 94px;
}

.line-select::before,
.weight-select::before {
    content: "";
    position: absolute;
    top: 5px;
    left: 2px;
    width: 35px;
    border-top: 1px solid #555;
    pointer-events: none;
}

.combo.line-select select {
    padding-left: 39px;
}

/* takes whatever width is left at the end of the row */
.toolbar-layers .weight-select {
    flex: 1;
    min-width: 0;
    max-width: 94px;
    margin-right: 0;
    overflow: hidden;
}

.weight-select::before {
    width: 100%;
}

.weight-select::after {
    display: none;
}

.toolbar-solids {
    height: 17px;
    border-bottom: 1px solid #aaa;
}

.group {
    display: flex;
    justify-content: space-between;
}

.group-bool {
    width: 38px;
    margin-left: 7px;
}

.group-face {
    width: 106px;
    margin-left: 6px;
}

.group-body {
    width: 97px;
    margin: 0 1px 0 6px;
}

.group-order {
    width: 52px;
    margin: 0 2px 0 3px;
}

.toolbar-solids .bar + .bar {
    margin-left: 3px;
}

/* workspace */
.workspace {
    display: flex;
    background: #f3f3f3;
}

.tools {
    display: flex;
    flex: none;
    flex-direction: column;
    align-items: center;
    justify-content: space-between;
    align-self: flex-start;
    padding: 7px 0 2px;
    border-top: 1px solid #bbb;
    border-bottom: 1px solid #ccc;
    background: #f8f9fa;
}

.tools-draw {
    width: 15px;
    height: 251px;
    border-right: 1px solid #bbb;
}

.tools-modify {
    width: 12px;
    height: 225px;
    padding-top: 6px;
    padding-left: 3px;
    align-items: flex-start;
    overflow: hidden;
    border-left: 1px solid #ccc;
}

.mtext {
    height: 10px;
    font-family: "Liberation Sans", sans-serif;
    font-size: 10px;
    font-weight: bold;
}

.viewer {
    flex: 1;
    min-width: 0;
}

.canvas {
    display: flex;
    justify-content: space-between;
    background: #000;
}

.drawing {
    display: block;
    flex: none;
}

.axis {
    fill: #c8c8c8;
    font-family: "Liberation Sans", sans-serif;
    font-size: 10px;
}

.vscroll {
    display: flex;
    flex: none;
    flex-direction: column;
    align-items: center;
    justify-content: space-between;
    width: 10px;
    background: #f0f0f0;
}

.vscroll button {
    width: 10px;
    height: 10px;
}

.vscroll .thumb {
    margin-top: 44px;
}

.thumb {
    flex: none;
    width: 9px;
    height: 9px;
    border: 1px solid #aaa;
    border-radius: 1px;
    background: linear-gradient(#fff, #d5d5d5);
}

.tabs {
    display: flex;
    align-items: center;
    height: 10px;
    background: #f3f3f3;
}

.tab-nav {
    display: flex;
    width: 35px;
    color: #aaa;
}

.tab-nav button {
    width: 8px;
    height: 8px;
    border: 1px solid #ddd;
    font-family: "DejaVu Sans", sans-serif;
    font-size: 5px;
    line-height: 6px;
}

.tab {
    width: 26px;
    height: 9px;
    line-height: 9px;
}

.tab.active {
    background: #000;
    color: #fff;
    clip-path: polygon(0 0, 100% 0, 88% 100%, 12% 100%);
}

.slash {
    width: 2px;
    font-size: 9px;
}

.hscroll {
    display: flex;
    flex: 1;
    align-items: center;
    justify-content: flex-end;
    gap: 2px;
    height: 9px;
    margin-left: 160px;
    padding-right: 9px;
    background: #ececec;
}

.hscroll button {
    width: 10px;
}

/* command window */
.command {
    display: flex;
    margin-top: 3px;
    padding: 5px 0 0 4px;
    border-top: 1px solid #444;
    border-bottom: 1px solid #aaa;
    background: #f3f3f3;
}

.command > .grip {
    height: 24px;
    margin-right: 1px;
}

.command-box {
    flex: 1;
    border-top: 1px solid #444;
    border-left: 1px solid #444;
    background: #fff;
    color: #333;
    font-family: "Liberation Mono", "Noto Sans CJK SC", monospace;
    font-size: 8px;
}

.command-row {
    display: flex;
    align-items: center;
    height: 13px;
    padding-left: 2px;
}

.command-row + .command-row {
    border-top: 1px solid #bbb;
}

.command-row p {
    flex: 1;
    margin: 0;
}

.command-row input {
    flex: 1;
    min-width: 0;
}

.history-scroll {
    display: flex;
    flex-direction: column;
    justify-content: space-around;
    align-items: center;
    width: 11px;
    height: 13px;
    background: #f0f0f0;
}

.line-scroll {
    display: flex;
    align-items: center;
    gap: 4px;
    width: 50px;
    height: 12px;
    padding-left: 4px;
    background: #f0f0f0;
}

.line-scroll button:last-child {
    margin-left: 8px;
}

/* popup menus */
.menu {
    position: absolute;
    display: flex;
    flex-direction: column;
    margin: 0;
    padding: 1px;
    list-style: none;
    border: 1px solid #aaa;
    background: #f4f4f4;
    box-shadow: 1px 1px 1px #777;
}

.menu li {
    position: relative;
    display: flex;
    align-items: center;
    flex: 1;
    white-space: nowrap;
}

.menu .selected {
    background: #1f78c1;
    color: #fff;
}

.context {
    top: 62px;
    left: 351px;
    width: 61px;
    height: 49px;
}

.context li {
    padding-left: 10px;
}

.context .divider {
    flex: none;
    height: 1px;
    margin: 2px 1px;
    background: #bbb;
}

.context .arrow-right {
    margin: 0 2px 0 auto;
}

.context .selected .arrow-right {
    border-left-color: #fff;
}

.submenu {
    top: 62px;
    left: 411px;
    width: 61px;
    height: 370px;
}

.submenu li {
    padding-left: 9px;
}

.submenu .checked::before {
    content: "";
    position: absolute;
    top: 3px;
    left: 3px;
    width: 4px;
    height: 2px;
    border-left: 1px solid #111;
    border-bottom: 1px solid #111;
    transform: rotate(-45deg);
}

/* selection handles */
.handle {
    position: absolute;
    width: 5px;
    height: 5px;
    border: 1px solid #222;
    border-radius: 50%;
    background: #fff;
}

.handle-top {
    top: -3px;
    left: 50%;
}

.handle-left {
    top: 220px;
    left: 0;
}
```
